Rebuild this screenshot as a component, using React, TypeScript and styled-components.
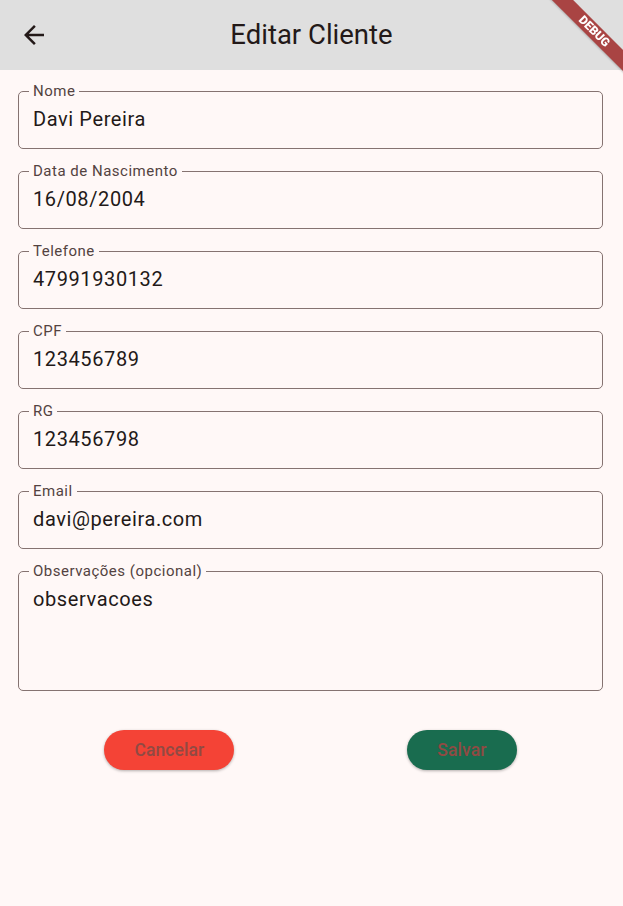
import React from 'react';
import styled, { createGlobalStyle } from 'styled-components';

const GlobalStyle = createGlobalStyle`
  html, body {
    margin: 0;
    padding: 0;
    background: #fff8f7;
    font-family: Roboto, "Liberation Sans", sans-serif;
  }
`;

type Campo = { label: string; value: string; multiline?: boolean };

const campos: Campo[] = [
  { label: 'Nome', value: 'Davi Pereira' },
  { label: 'Data de Nascimento', value: '16/08/2004' },
  { label: 'Telefone', value: '47991930132' },
  { label: 'CPF', value: '123456789' },
  { label: 'RG', value: '123456798' },
  { label: 'Email', value: 'davi@pereira.com' },
  { label: 'Observações (opcional)', value: 'observacoes', multiline: true },
];

const BackIcon: React.FC = () => (
  <svg width="30" height="30" viewBox="0 0 24 24" fill="#231918">
    <path d="M20 11H7.83l5.59-5.59L12 4l-8 8 8 8 1.41-1.41L7.83 13H20v-2z" />
  </svg>
);

export default function App() {
  return (
    <>
      <GlobalStyle />
      <Page>
        <AppBar>
          <Leading aria-label="Voltar">
            <BackIcon />
          </Leading>
          <Title>Editar Cliente</Title>
          <span />
        </AppBar>
        <Form>
          {campos.map((c) => (
            <Field key={c.label}>
              <Label>{c.label}</Label>
              {c.multiline ? (
                <TextArea defaultValue={c.value} />
              ) : (
                <Input defaultValue={c.value} />
              )}
            </Field>
          ))}
          <Actions>
            <ActionButton type="button" $bg="#f44336">
              Cancelar
            </ActionButton>
            <ActionButton type="button" $bg="#196c4f">
              Salvar
            </ActionButton>
          </Actions>
        </Form>
      </Page>
      <BannerCorner>
        <Banner>DEBUG</Banner>
      </BannerCorner>
    </>
  );
}

const Page = styled.div`
  min-height: 906px;
  background: #fff8f7;
`;

const AppBar = styled.header`
  display: grid;
  grid-template-columns: 70px 1fr 70px;
  align-items: center;
  height: 70px;
  background: #dfdfdf;
`;

const Leading = styled.button`
  display: flex;
  align-items: center;
  justify-content: center;
  width: 70px;
  height: 70px;
  padding: 0 2px 0 0;
  border: none;
  background: transparent;
`;

const Title = styled.h1`
  margin: 0;
  text-align: center;
  font-size: 27.5px;
  font-weight: 400;
  color: #231918;
  line-height: 34px;
`;

const Form = styled.form`
  display: flex;
  flex-direction: column;
  gap: 14px;
  padding: 13px 20px 0 18px;
`;

const Field = styled.fieldset`
  margin: 0;
  padding: 8px 14px 17px;
  border: 1px solid #857371;
  border-radius: 5px;
  min-width: 0;
`;

const Label = styled.legend`
  margin-left: -4px;
  padding: 0 4px;
  font-size: 15px;
  line-height: 16px;
  letter-spacing: 0.5px;
  color: #534341;
`;

const Input = styled.input`
  display: block;
  width: 100%;
  height: 24px;
  padding: 0;
  border: none;
  outline: none;
  background: transparent;
  font-family: Roboto, "Liberation Sans", sans-serif;
  font-size: 20px;
  line-height: 24px;
  letter-spacing: 0.6px;
  color: #231918;
`;

const TextArea = styled.textarea`
  display: block;
  width: 100%;
  height: 86px;
  padding: 0;
  border: none;
  outline: none;
  resize: none;
  background: transparent;
  font-family: Roboto, "Liberation Sans", sans-serif;
  font-size: 20px;
  line-height: 24px;
  letter-spacing: 0.6px;
  color: #231918;
`;

const Actions = styled.div`
  display: flex;
  justify-content: space-around;
  margin-top: 25px;
`;

const ActionButton = styled.button<{ $bg: string }>`
  height: 40px;
  padding: 0 30px;
  border: none;
  border-radius: 20px;
  background: ${(p) => p.$bg};
  box-shadow: 0 1px 3px rgba(0, 0, 0, 0.3);
  font-family: Roboto, "Liberation Sans", sans-serif;
  font-size: 17.5px;
  font-weight: 500;
  letter-spacing: 0.1px;
  color: #904a43;
`;

const BannerCorner = styled.div`
  position: fixed;
  top: 0;
  right: 0;
  width: 80px;
  height: 80px;
  overflow: hidden;
  pointer-events: none;
`;

const Banner = styled.div`
  position: absolute;
  left: -9px;
  top: 24px;
  width: 120px;
  height: 15px;
  transform: rotate(45deg);
  background: #a94443;
  box-shadow: 0 1px 2px rgba(0, 0, 0, 0.2);
  color: #fff;
  font-family: Roboto, "Liberation Sans", sans-serif;
  font-size: 12px;
  font-weight: 900;
  line-height: 15px;
  text-align: center;
`;
